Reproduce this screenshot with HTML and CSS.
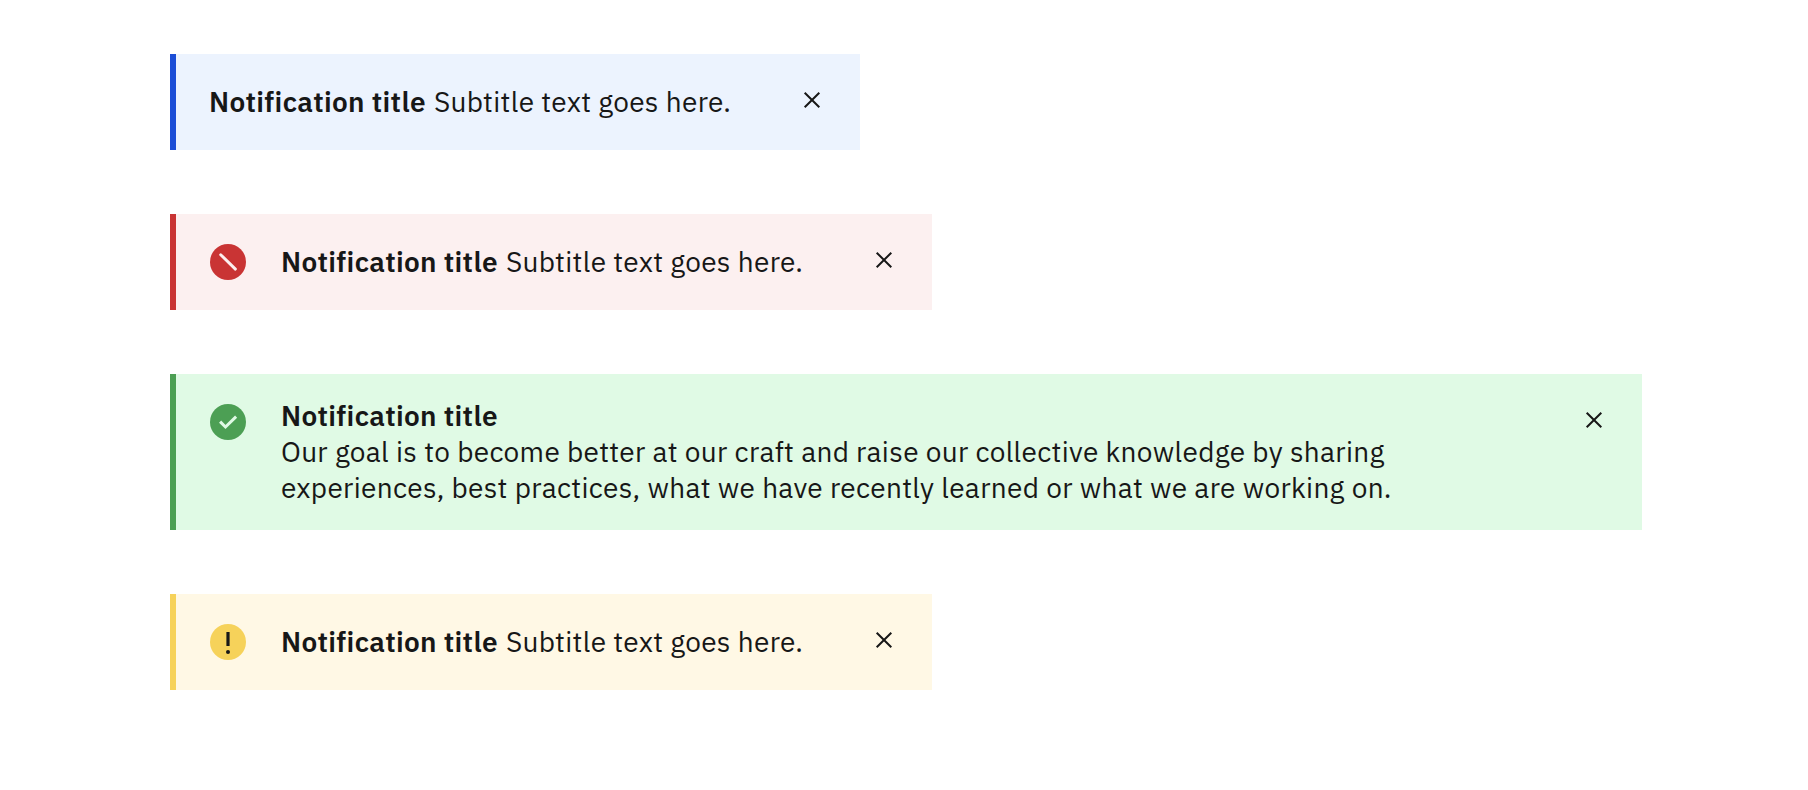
FILE: index.html
```html
<!DOCTYPE html>
<html lang="en">
<head>
<meta charset="utf-8">
<title>Notifications</title>
<link rel="stylesheet" href="styles.css">
</head>
<body>
<main class="stack">
  <section class="note note-info">
    <p class="message"><strong class="title">Notification title</strong><span class="subtitle">Subtitle text goes here.</span></p>
    <button class="close" aria-label="Close"><svg viewBox="0 0 18 18"><path d="M1.7 1.7l14.6 14.6M16.3 1.7l-14.6 14.6"/></svg></button>
  </section>
  <section class="note note-error">
    <svg class="status" viewBox="0 0 36 36"><circle cx="18" cy="18" r="18"/><path class="slash" d="M10.7 10.7L25.4 25.1"/></svg>
    <p class="message"><strong class="title">Notification title</strong><span class="subtitle">Subtitle text goes here.</span></p>
    <button class="close" aria-label="Close"><svg viewBox="0 0 18 18"><path d="M1.7 1.7l14.6 14.6M16.3 1.7l-14.6 14.6"/></svg></button>
  </section>
  <section class="note note-success">
    <svg class="status" viewBox="0 0 36 36"><circle cx="18" cy="18" r="18"/><path class="check" d="M10.1 17.6L15.5 23L26.1 12.7"/></svg>
    <div class="message message-long">
      <strong class="title">Notification title</strong>
      <span class="line">Our goal is to become better at our craft and raise our collective knowledge by sharing</span>
      <span class="line">experiences, best practices, what we have recently learned or what we are working on.</span>
    </div>
    <button class="close" aria-label="Close"><svg viewBox="0 0 18 18"><path d="M1.7 1.7l14.6 14.6M16.3 1.7l-14.6 14.6"/></svg></button>
  </section>
  <section class="note note-warning">
    <svg class="status" viewBox="0 0 36 36"><circle cx="18" cy="18" r="18"/><path class="bang" d="M16.4 8h3.2v14h-3.2z"/><circle class="bang" cx="18" cy="28" r="2"/></svg>
    <p class="message"><strong class="title">Notification title</strong><span class="subtitle">Subtitle text goes here.</span></p>
    <button class="close" aria-label="Close"><svg viewBox="0 0 18 18"><path d="M1.7 1.7l14.6 14.6M16.3 1.7l-14.6 14.6"/></svg></button>
  </section>
</main>
</body>
</html>
```

FILE: styles.css
```css
* { box-sizing: border-box; }
body {
  margin: 0;
  background: #fff;
  color: #171717;
  font-family: "IBM Plex Sans", "Open Sans", sans-serif;
  font-size: 28px;
  line-height: 36px;
  letter-spacing: 0.32px;
}
.stack {
  display: flex;
  flex-direction: column;
  align-items: flex-start;
  gap: 64px;
  padding: 54px 0 0 170px;
}
.note {
  display: flex;
  align-items: flex-start;
  width: 762px;
  height: 96px;
  padding: 30px 39px 0 34px;
  border-left: 6px solid;
}
.note-info { width: 690px; padding-left: 33px; background: #ecf3fe; border-color: #1b4dd6; }
.note-error { background: #fcf0f0; border-color: #c93434; }
.note-success { width: 1472px; height: 156px; background: #e0fae5; border-color: #4c9f54; }
.note-warning { background: #fff8e5; border-color: #f6d25a; }
.status { flex: none; width: 36px; height: 36px; margin-right: 35px; }
.note-error .status { fill: #c93434; }
.note-success .status { fill: #4c9f54; }
.note-warning .status { fill: #f6d25a; }
.slash { stroke: #fcf0f0; stroke-width: 2.9; stroke-linecap: round; }
.check { fill: none; stroke: #e0fae5; stroke-width: 3; }
.status .bang { fill: #171717; }
.message { display: flex; margin: 0; white-space: nowrap; }
.message-long { flex-direction: column; margin-top: -6px; }
.title { margin-right: 8px; font-weight: 600; }
.close {
  display: flex;
  width: 18px;
  height: 18px;
  margin: 7px 0 0 auto;
  padding: 0;
  border: 0;
  background: none;
}
.close svg { width: 18px; height: 18px; fill: none; stroke: #171717; stroke-width: 2; }
```
